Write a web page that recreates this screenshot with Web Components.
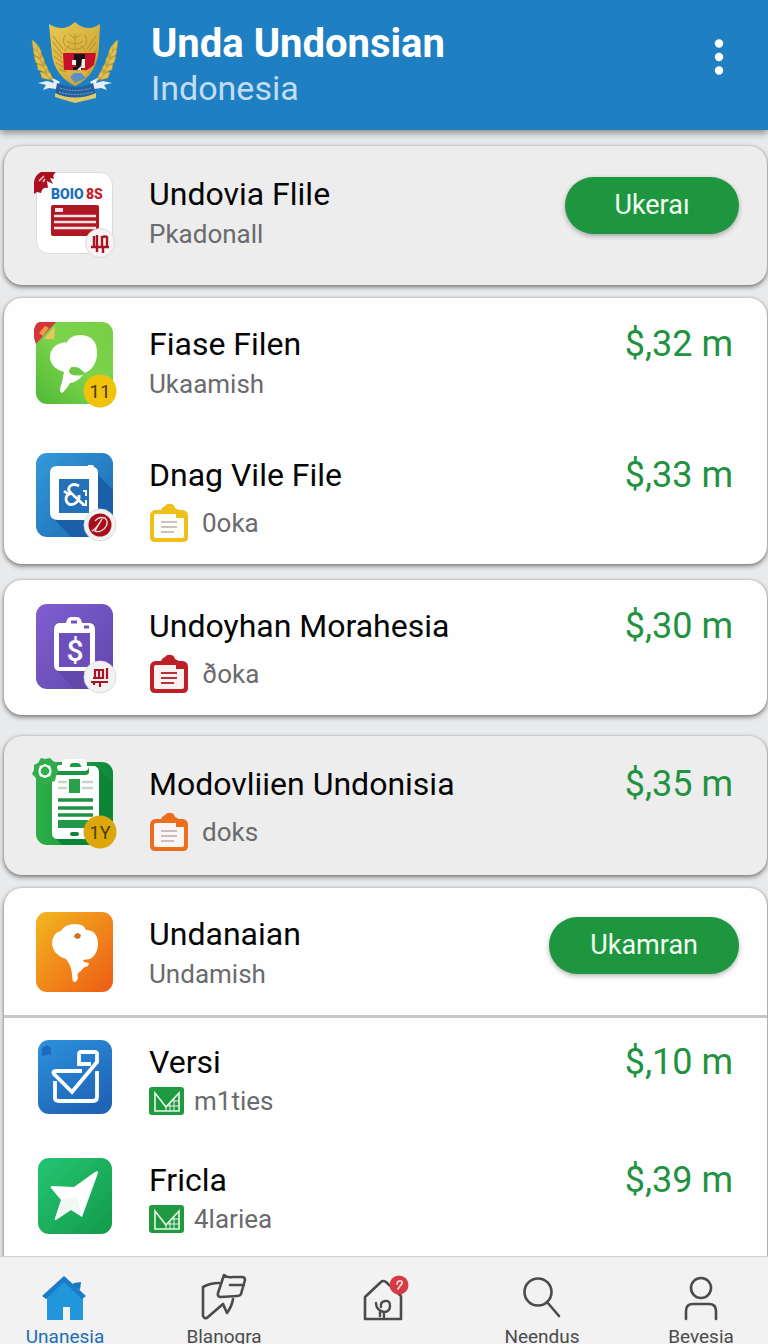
<!DOCTYPE html>
<html lang="id">
<head>
<meta charset="UTF-8">
<meta name="viewport" content="width=device-width, initial-scale=1">
<title>Unda Undonsian</title>
<style>
  body {
    margin: 0;
    font-family: Roboto, "Liberation Sans", sans-serif;
    background: #e9eaeb;
  }
</style>
</head>
<body>

<unda-app></unda-app>

<script>
const WHEAT = `
  <path d="M2 20q7 6 9 18 4 12 14 22-12-4-17-15Q2 32 2 20z" fill="#c9a43a" stroke="none"/>
  <path d="M1 18q6 3 7 11l-6-3zM2 26q6 3 8 10l-7-3zM3 34q6 2 9 9l-7-2zM6 42q6 1 9 8l-8-2zM9 50q6 0 10 8l-8-2z"/>
  <path d="M6 22q5 6 5 14l-4-5zM9 31q5 5 5 13l-4-5zM12 39q5 5 6 12l-5-4zM15 46q5 4 7 12l-6-4z"/>`;

// Drawings, each one with its own width, height and markup
const ICONS = {
  emblem: [88, 82, `
    <defs><linearGradient id="g" x2="1" y2="1"><stop stop-color="#e6c755"/><stop offset=".5" stop-color="#d9b440"/><stop offset="1" stop-color="#c79a2c"/></linearGradient></defs>
    <g fill="#e0c152" stroke="#a98a2a" stroke-width=".4">${WHEAT}</g>
    <g transform="translate(88 0) scale(-1 1)" fill="#e0c152" stroke="#a98a2a" stroke-width=".4">${WHEAT}</g>
    <path d="M18 2Q32 11 44 0Q56 11 69 2L68 24Q67 53 44 64Q24 54 21 33Z" fill="url(#g)"/>
    <path d="M22 14l10 13M22 20l9 12M22 27l9 9M23 34l9 7M25 41l9 5M28 47l9 4M65 14L56 27M65 20l-7 9M66 27l-5 6M65 36l-8 8M62 43l-8 6M58 50l-9 5" stroke="#b18c2e" fill="none"/>
    <path d="M34 13q-4 8 2 12q8 5 16 0q6-4 2-12M38 12q6 7 12 0M36 19q8 6 16 0M44 12v16M39 23l-6 6M49 23l6 6" stroke="#b9932f" fill="none"/>
    <path d="M32 31h33l-2 12-7 5H33z" fill="#c8102b"/>
    <path d="M43 32h11v5h-3v9l-4 5h-5v-6h3v-7h-2z" fill="#191415"/>
    <path d="M41 38h4v5h-4zM51 37h3v9h-4zM46 48l4-4v5z" fill="#f6eee4"/>
    <path d="M34 50q10-4 20 0l4-3q-2 9-14 14q-8-4-10-11z" fill="#d6b248"/>
    <path d="M39 55l4-4h7l5 5-11 5z" fill="#5d8fc0"/>
    <path d="M7 61l9-2 7 2-2-5q5 2 8 4l-4 7-7-1-6 2 3-5zM81 61l-9-2-7 2 2-5q-5 2-8 4l4 7 7-1 6 2-3-5z" fill="#e9eef2"/>
    <path d="M26 61q18 8 36 0l3 12q-20 8-41 0z" fill="#23609c"/>
    <path d="M29 66q15 5 31 0M28 70q16 5 34 0" stroke="#7fa9cf" stroke-dasharray="2 1" fill="none"/>
    <path d="M24 71q20 9 41 0v5l-21 5-20-6z" fill="#e0c866"/>`],

  bank: [77, 84, `
    <rect x=".5" y=".5" width="76" height="81" rx="12" fill="#fff" stroke="#dcdcde"/>
    <path d="M5 0h15q-4 3-2 7l-4-1 3 6-6-3 1 7q-6-1-7 5l-4-1-3 2V10Q-1 3 5 0z" fill="#a90f1d"/>
    <path d="M3 9l5-5M7 10l2-3" stroke="#f0c3c3" stroke-width="1.6" fill="none"/>
    <text x="15" y="27" font-size="14" font-weight="900" fill="#1c6fb8">BOIO</text>
    <text x="50" y="27" font-size="14" font-weight="900" fill="#c8202c">8S</text>
    <rect x="15" y="33" width="48" height="31" rx="2" fill="#b01722"/>
    <path d="M19 38h8" stroke="#f7e3e3" stroke-width="4"/>
    <path d="M18 44h42M18 50h42M18 56h42" stroke="#f7e3e3" stroke-width="2.6"/>
    <circle cx="64" cy="71" r="14.5" fill="#f5f4f3" stroke="#dcdada"/>
    <path d="M58 64v11M61 63v11M66 64v10M66 65q4-1 5 0v9M55 75h18M61 75v5M67 75v6" stroke="#a81522" stroke-width="2.4" fill="none"/>`],

  chat: [77, 84, `
    <defs><linearGradient id="g" x1="0" y1="1" x2="1" y2="0"><stop stop-color="#4fb835"/><stop offset=".5" stop-color="#7bd34b"/><stop offset="1" stop-color="#78cf45"/></linearGradient></defs>
    <rect width="77" height="82" rx="11" fill="url(#g)"/>
    <path d="M8 17L19 4l-1 13z" fill="#ecc558"/>
    <path d="M4 0h16L0 22l-2-6V7Q0 0 4 0z" fill="#d7343a"/>
    <path d="M3 11l6-7 4 2-6 8z" fill="#f09a4d"/>
    <path d="M30 22Q33 13 45 13Q61 14 61 31Q61 47 46 52Q40 52 38 45Q34 44 33 50Q35 55 47 53Q40 61 34 61Q30 68 26 71Q22 71 26 60L28 50Q15 46 14 36Q14 22 30 20Z" fill="#fff"/>
    <path d="M33 49q4-6 10-3l6 5q-7 3-13 0z" fill="#6dc748"/>
    <circle cx="64" cy="69" r="16.5" fill="#f0c20c"/>
    <text x="64" y="76" font-size="19" text-anchor="middle" fill="#4b3b0a">11</text>`],

  device: [77, 84, `
    <defs><linearGradient id="g" x2="1" y2="1"><stop stop-color="#3499da"/><stop offset="1" stop-color="#1b68b1"/></linearGradient></defs>
    <rect width="77" height="84" rx="11" fill="url(#g)"/>
    <path d="M61 21l16 16v36L66 84H35L17 65z" fill="#1a5fa8"/>
    <path d="M21 13h31v-1h5l1 2q4 1 4 6v40q0 7-7 7H22q-8 0-8-7V20q0-7 7-7z" fill="#fff"/>
    <rect x="23" y="26" width="30" height="34" fill="#2372b9"/>
    <path d="M43 33q-5-3-9 0q-3 4 1 7l13 12M36 40q-7 2-6 7q2 6 8 4q6-3 5-9M28 38l4 3" stroke="#fff" stroke-width="2.8" fill="none"/>
    <path d="M47 38h3v5M50 47v5h-4" stroke="#fff" stroke-width="2" fill="none"/>
    <circle cx="64" cy="72" r="16" fill="#f3f2f1" stroke="#dedddd"/>
    <circle cx="64" cy="72" r="11.5" fill="#a50f1c"/>
    <path d="M59 68q4-5 10-3q5 5-1 11q-5 4-9 2l7-12q-6 10-10 12" stroke="#f4d6d6" stroke-width="1.4" fill="none"/>`],

  invoice: [77, 86, `
    <defs><linearGradient id="g" x2="1" y2="1"><stop stop-color="#7f5fd0"/><stop offset="1" stop-color="#6146ac"/></linearGradient></defs>
    <rect width="77" height="85" rx="11" fill="url(#g)"/>
    <path d="M20 66h40v19H39z" fill="#6247ab"/>
    <path d="M23 19h7q1-6 5-6h6q4 0 5 6h7q6 0 6 7v34q0 7-7 7H24q-6 0-6-6V26q0-6 5-7z" fill="#fff"/>
    <rect x="23" y="29" width="31" height="34" fill="#6c4fbb"/>
    <path d="M35 18h6M48 23h5" stroke="#7052c0" stroke-width="3"/>
    <text x="39" y="57" font-size="30" font-weight="500" text-anchor="middle" fill="#fff">$</text>
    <circle cx="64" cy="73" r="16" fill="#f4f2f2" stroke="#dedbe0"/>
    <path d="M59 65v10M63 65v10M67 65v10M71 64v11M58 66h9M57 74h10M55 78h17M58 78v3M64 78v5" stroke="#a81522" stroke-width="2.2" fill="none"/>`],

  tablet: [77, 84, `
    <defs><linearGradient id="g" x2="1"><stop stop-color="#2fae49"/><stop offset="1" stop-color="#0c8a3a"/></linearGradient></defs>
    <rect width="77" height="83" rx="11" fill="url(#g)"/>
    <path d="M62 6l14 15v48L62 83H26L17 73z" fill="#0b8436"/>
    <path d="M22 4h37q4 2 4 6v62q0 5-6 5H22q-6 0-6-6V10q0-5 6-6z" fill="#fff"/>
    <path d="M12 9h36q5 0 5-5v6q0 3-4 3H18z" fill="#199441"/>
    <path d="M26 0q0-3 4-3h16q5 0 5 5v6H22V3h4z" fill="#fff"/>
    <path d="M34 4q0-3 3-3h4q4 0 4 4H34z" fill="#1f9a45"/>
    <path d="M22 20h9M22 26h9M46 20h11M46 26h11" stroke="#c9d4cb" stroke-width="2.4"/>
    <rect x="33" y="17" width="11" height="14" fill="#2ba04a"/>
    <path d="M22 38h35M22 46h35M22 53h35" stroke="#1f9243" stroke-width="3.5"/>
    <path d="M22 58h30v8H22z" fill="#23974a"/>
    <rect x="34" y="70" width="9" height="4" rx="2" fill="#16813a"/>
    <path d="M5-4l4 1 5-1 3 3 4 2 0 5 2 4-3 4-1 5-5 1-4 3-4-3-5 0-1-4-4-4 2-4 0-5 4-2z" fill="#2fae49"/>
    <circle cx="9" cy="9" r="5.5" fill="none" stroke="#fff" stroke-width="2.2"/>
    <path d="M9 2v2M9 14v2M4 4l2 2M14 4l-2 2M4 14l2-2M14 14l-2-2" stroke="#fff" stroke-width="2"/>
    <circle cx="64" cy="70" r="16.5" fill="#dba70d"/>
    <text x="64" y="77" font-size="18" text-anchor="middle" fill="#4b3b0a">1Y</text>`],

  tree: [77, 80, `
    <defs><linearGradient id="g" x2="1" y2="1"><stop stop-color="#f2b71f"/><stop offset="1" stop-color="#ee5b15"/></linearGradient></defs>
    <rect width="77" height="80" rx="11" fill="url(#g)"/>
    <path d="M25 19q4-7 14-7q9 0 11 6q12 0 12 15q-1 10-8 14l-7 1 1 2 5 1-1 3q-5 1-7 5q-5 2-3 7q-1 4-4 4q-2-1-2-8q-1-9-6-15q-13-4-14-15q0-11 9-13z" fill="#fff"/>
    <path d="M39 22l3-1 3 2-1 3-3 1-3-2z" fill="#cf6f1f"/>`],

  ballot: [74, 74, `
    <defs><linearGradient id="g" x2=".6" y2="1"><stop stop-color="#2c93dc"/><stop offset="1" stop-color="#2064b8"/></linearGradient></defs>
    <rect width="74" height="74" rx="11" fill="url(#g)"/>
    <path d="M4 16V8l5-3 4 3v6z" fill="#1c6bc0"/>
    <path d="M17 41v17q0 3 4 3h34q4 0 4-4V31M44 31H18q-4 0-2 3l18 18 25-30V14q0-2-3-2H43q-2 0-2 3v9h12" fill="none" stroke="#fff" stroke-width="3.8"/>`],

  send: [74, 76, `
    <defs><linearGradient id="g" x2="1" y2="1"><stop stop-color="#25c573"/><stop offset="1" stop-color="#129a4a"/></linearGradient></defs>
    <rect width="74" height="76" rx="11" fill="url(#g)"/>
    <path d="M57 14q3-2 3 1L44 59 33 52 18 62q-2 0-1-2l6-18L13 30q-1-2 1-2l22 1z" fill="#fff"/>
    <path d="M24 42l16-3 3 18-10-6-14 9z" fill="#f1f7f2"/>`],

  yellowboard: [40, 40, clipboard('#efbf1c', '#fffdf6', '#c9c5be')],
  redboard: [40, 40, clipboard('#bb2026', '#fdf0f1', '#b3353b')],
  orangeboard: [40, 40, clipboard('#ea6f1e', '#fbf6f3', '#c4c0bf')],

  chart: [35, 28, `
    <rect width="35" height="28" rx="3" fill="#1f9a41"/>
    <path d="M6 24V6l11 14L30 6v18z" fill="none" stroke="#e9f8e6" stroke-width="1.6"/>
    <path d="M17 20v4M21 16v8M25 12v12M19 19h11M23 14h7" stroke="#e9f8e6"/>`],

  home: [44, 44, `
    <path d="M4 18L22 1l18 17v26H27V31h-7v13H4z" fill="#2196db"/>
    <path d="M29 9l2-2 7-1-1 8z" fill="#1c77bc"/>
    <path d="M21 0l22 20-4 3L21 6 3 23l-4-3z" fill="#1a7cc4"/>`],

  flags: [44, 44, `
    <path d="M17 7Q8 7 1 11v29q2 4 5 1l15-13 4 9q5-7 6-14" fill="none"/>
    <path d="M22-1q3 3 9 2h9q3 0 3 3l-4 14q-1 2-4 2l-16 1q-4 0-3-4zM28 9h14" fill="none"/>`],

  market: [40, 44, `
    <path d="M2 43V21L18 6q2-2 5 0l15 14v23z" fill="none"/>
    <path d="M13 27q0 7 8 9 6 0 6-6t-5-5-4 6M17 36v4M21 37v4" fill="none" stroke-width="2.4"/>
    <circle cx="36" cy="9" r="9.5" fill="#d63b45" stroke="none"/>
    <path d="M34 8q1-4 4-3t-1 5l-2 3" fill="none" stroke="#ffe3dd" stroke-width="1.6"/>`],

  search: [44, 44, `
    <circle cx="18" cy="16" r="13.5" fill="none"/>
    <path d="M27 26l12 14" fill="none"/>`],

  user: [44, 44, `
    <circle cx="22" cy="12" r="10" fill="none"/>
    <path d="M7 43v-8q0-7 7-7h16q7 0 7 7v8" fill="none"/>`],

  more: [8, 36, `<circle cx="4" cy="4.5" r="4.2"/><circle cx="4" cy="18" r="4.2"/><circle cx="4" cy="31.5" r="4.2"/>`]
};

function clipboard(frame, paper, lines) {
  return `
    <path d="M6 7h6q1-3 4-4 2-3 6-2 3 0 4 4l4 2h4q5 1 5 6v21q0 5-5 5H6q-5 0-5-5V13q0-5 5-6z" fill="${frame}"/>
    <path d="M5 13q0-2 2-2h20v4h8v18q0 2-2 2H7q-2 0-2-2z" fill="${paper}"/>
    <path d="M12 19h16M12 24h16M12 29h13" stroke="${lines}" stroke-width="2"/>`;
}

class UndaIcon extends HTMLElement {
  constructor() {
    super();
    this.attachShadow({ mode: 'open' });
  }

  connectedCallback() {
    const [w, h, art] = ICONS[this.getAttribute('name')];
    this.shadowRoot.innerHTML = `
      <style>
        :host { display: block; flex: none; }
        svg { display: block; overflow: visible; }
      </style>
      <svg width="${w}" height="${h}" viewBox="0 0 ${w} ${h}" aria-hidden="true">${art}</svg>
    `;
  }
}

class AppHeader extends HTMLElement {
  constructor() {
    super();
    this.attachShadow({ mode: 'open' });
  }

  connectedCallback() {
    this.shadowRoot.innerHTML = `
      <style>
        :host {
          display: flex;
          align-items: flex-start;
          gap: 32px;
          box-sizing: border-box;
          min-height: 130px;
          padding: 22px 36px 16px 31px;
          background: #1e80c3;
          color: #fff;
          box-shadow: 0 2px 8px rgba(0, 0, 0, .5);
        }
        .titles { flex: 1; min-width: 0; }
        h1, p { margin: 0; line-height: 44px; }
        h1 { font-size: 40px; font-weight: 700; }
        p { font-size: 34px; color: #c3dcf1; }
        button {
          margin: 17px 0 0;
          padding: 0 9px;
          border: 0;
          background: none;
          color: inherit;
          fill: currentColor;
        }
      </style>
      <unda-icon name="emblem"></unda-icon>
      <div class="titles">
        <h1><slot></slot></h1>
        <p><slot name="country"></slot></p>
      </div>
      <button aria-label="Menu"><unda-icon name="more"></unda-icon></button>
    `;
  }
}

class ListCard extends HTMLElement {
  constructor() {
    super();
    this.attachShadow({ mode: 'open' });
  }

  connectedCallback() {
    this.shadowRoot.innerHTML = `
      <style>
        :host {
          display: block;
          border-radius: 18px;
          background: #fefefe;
          box-shadow: 0 2px 5px rgba(0, 0, 0, .5), 0 0 2px rgba(0, 0, 0, .2);
        }
        :host([tone="grey"]) {
          --section-top: 26px;
          --section-bottom: 23px;
          background: #ededee;
        }
      </style>
      <slot></slot>
    `;
  }
}

class CardSection extends HTMLElement {
  constructor() {
    super();
    this.attachShadow({ mode: 'open' });
  }

  connectedCallback() {
    this.shadowRoot.innerHTML = `
      <style>
        :host {
          display: flex;
          flex-direction: column;
          gap: 41px;
          padding: var(--section-top, 24px) 28px var(--section-bottom, 21px) 32px;
        }
        :host([short]) { padding-bottom: 13px; }
        :host([dense]) {
          --note-height: 38px;
          --row-height: 78px;
          --note-gap: 10px;
          --mark-top: 0;
          gap: 38px;
          padding-top: 22px;
          border-top: 3px solid #c6c6c6;
        }
      </style>
      <slot></slot>
    `;
  }
}

class FileRow extends HTMLElement {
  constructor() {
    super();
    this.attachShadow({ mode: 'open' });
  }

  connectedCallback() {
    const mark = this.getAttribute('mark');
    this.shadowRoot.innerHTML = `
      <style>
        :host {
          display: flex;
          align-items: flex-start;
          gap: 36px;
          min-height: var(--row-height, 90px);
        }
        .tile {
          display: flex;
          justify-content: center;
          width: 77px;
        }
        .text { flex: 1; min-width: 0; padding-top: 2px; }
        h2, p { margin: 0; font-weight: 400; }
        h2 { font-size: 32px; line-height: 40px; color: #050505; }
        p {
          display: flex;
          align-items: center;
          gap: var(--note-gap, 13px);
          font-size: 26px;
          line-height: var(--note-height, 40px);
          color: #6a6b6d;
        }
        .marked { padding-top: var(--mark-top, 8px); }
        .end { padding-top: 2px; }
      </style>
      <div class="tile"><unda-icon name="${this.getAttribute('icon')}"></unda-icon></div>
      <div class="text">
        <h2><slot></slot></h2>
        <p class="${mark ? 'marked' : ''}">
          ${mark ? `<unda-icon name="${mark}"></unda-icon>` : ''}<slot name="note"></slot>
        </p>
      </div>
      <div class="end"><slot name="end"></slot></div>
    `;
  }
}

class FilePrice extends HTMLElement {
  constructor() {
    super();
    this.attachShadow({ mode: 'open' });
  }

  connectedCallback() {
    this.shadowRoot.innerHTML = `
      <style>
        :host {
          display: block;
          padding-right: 6px;
          font-size: 36px;
          line-height: 40px;
          color: #21923f;
          white-space: nowrap;
        }
      </style>
      <slot></slot>
    `;
  }
}

class PillButton extends HTMLElement {
  constructor() {
    super();
    this.attachShadow({ mode: 'open' });
  }

  connectedCallback() {
    this.shadowRoot.innerHTML = `
      <style>
        :host { display: block; }
        button {
          display: block;
          min-width: 174px;
          margin: 3px 0 0;
          padding: 0 41px;
          border: 0;
          border-radius: 29px;
          background: #1e963f;
          color: #f1fff2;
          font: inherit;
          font-size: 27px;
          line-height: 57px;
          box-shadow: 0 2px 5px rgba(0, 0, 0, .3);
        }
      </style>
      <button><slot></slot></button>
    `;
  }
}

class NavItem extends HTMLElement {
  constructor() {
    super();
    this.attachShadow({ mode: 'open' });
  }

  connectedCallback() {
    const label = this.getAttribute('label');
    this.shadowRoot.innerHTML = `
      <style>
        :host { display: block; min-width: 80px; color: #4b4b4b; }
        :host([active]) { color: #1c6fb5; }
        a {
          display: flex;
          flex-direction: column;
          align-items: center;
          gap: 5px;
          color: inherit;
          text-decoration: none;
          font-size: 19px;
          line-height: 24px;
        }
        unda-icon {
          stroke: #4b4b4b;
          stroke-width: 2.6px;
          stroke-linecap: round;
          stroke-linejoin: round;
        }
        :host([active]) unda-icon { stroke: none; }
      </style>
      <a href="#" ${label ? `aria-label="${label}"` : ''}>
        <unda-icon name="${this.getAttribute('icon')}"></unda-icon>
        <span><slot></slot></span>
      </a>
    `;
  }
}

class BottomNav extends HTMLElement {
  constructor() {
    super();
    this.attachShadow({ mode: 'open' });
  }

  connectedCallback() {
    this.shadowRoot.innerHTML = `
      <style>
        :host {
          display: block;
          overflow: hidden;
          background: #f2f2f3;
          border-top: 1px solid #cfcfcf;
        }
        nav {
          display: flex;
          justify-content: space-between;
          padding: 19px 27px 0 25px;
        }
      </style>
      <nav><slot></slot></nav>
    `;
  }
}

class UndaApp extends HTMLElement {
  constructor() {
    super();
    this.attachShadow({ mode: 'open' });
  }

  connectedCallback() {
    this.shadowRoot.innerHTML = `
      <style>
        :host {
          display: grid;
          grid-template-rows: auto minmax(0, 1fr) 88px;
          height: 100vh;
        }
        app-header { position: relative; z-index: 1; }
        main {
          display: flex;
          flex-direction: column;
          padding: 16px 1px 0 4px;
          overflow-y: auto;
          scrollbar-width: none;
        }
        list-card { flex: none; margin-bottom: 16px; }
        list-card.near { margin-bottom: 13px; }
        list-card.far { margin-bottom: 21px; }
        list-card.last { flex: 1 0 auto; margin: 0; border-radius: 18px 18px 0 0; }
      </style>

      <app-header>Unda Undonsian<span slot="country">Indonesia</span></app-header>

      <main>
        <list-card tone="grey" class="near">
          <card-section>
            <file-row icon="bank">Undovia Flile
              <span slot="note">Pkadonall</span>
              <pill-button slot="end">Ukeraı</pill-button>
            </file-row>
          </card-section>
        </list-card>

        <list-card>
          <card-section>
            <file-row icon="chat">Fiase Filen
              <span slot="note">Ukaamish</span>
              <file-price slot="end">$,32 m</file-price>
            </file-row>
            <file-row icon="device" mark="yellowboard">Dnag Vile File
              <span slot="note">0oka</span>
              <file-price slot="end">$,33 m</file-price>
            </file-row>
          </card-section>
        </list-card>

        <list-card class="far">
          <card-section>
            <file-row icon="invoice" mark="redboard">Undoyhan Morahesia
              <span slot="note">ðoka</span>
              <file-price slot="end">$,30 m</file-price>
            </file-row>
          </card-section>
        </list-card>

        <list-card tone="grey" class="near">
          <card-section>
            <file-row icon="tablet" mark="orangeboard">Modovliien Undonisia
              <span slot="note">doks</span>
              <file-price slot="end">$,35 m</file-price>
            </file-row>
          </card-section>
        </list-card>

        <list-card class="last">
          <card-section short>
            <file-row icon="tree">Undanaian
              <span slot="note">Undamish</span>
              <pill-button slot="end">Ukamran</pill-button>
            </file-row>
          </card-section>
          <card-section dense>
            <file-row icon="ballot" mark="chart">Versi
              <span slot="note">m1ties</span>
              <file-price slot="end">$,10 m</file-price>
            </file-row>
            <file-row icon="send" mark="chart">Fricla
              <span slot="note">4lariea</span>
              <file-price slot="end">$,39 m</file-price>
            </file-row>
          </card-section>
        </list-card>
      </main>

      <bottom-nav>
        <nav-item icon="home" active>Unanesia</nav-item>
        <nav-item icon="flags">Blanogra</nav-item>
        <nav-item icon="market" label="Market"></nav-item>
        <nav-item icon="search">Neendus</nav-item>
        <nav-item icon="user">Bevesia</nav-item>
      </bottom-nav>
    `;
  }
}

customElements.define('unda-icon', UndaIcon);
customElements.define('app-header', AppHeader);
customElements.define('list-card', ListCard);
customElements.define('card-section', CardSection);
customElements.define('file-row', FileRow);
customElements.define('file-price', FilePrice);
customElements.define('pill-button', PillButton);
customElements.define('nav-item', NavItem);
customElements.define('bottom-nav', BottomNav);
customElements.define('unda-app', UndaApp);
</script>
</body>
</html>
